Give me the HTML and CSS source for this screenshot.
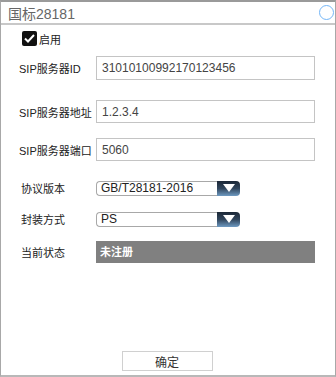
FILE: index.html
```html
<!DOCTYPE html>
<html lang="zh-CN">
<head>
  <meta charset="UTF-8" />
  <title>国标28181</title>
  <link rel="stylesheet" href="styles.css">
</head>
<body>
  <div class="window">
    <div class="titlebar">
      <span class="title">国标28181</span>
      <span class="close-ring"></span>
    </div>

    <div class="content">
      <!-- enable -->
      <label class="row check-row">
        <span class="checkbox">
          <svg width="11" height="9" viewBox="0 0 11 9"><path d="M1 4.5 L4 7.5 L10 1" fill="none" stroke="#fff" stroke-width="2"/></svg>
        </span>
        <span>启用</span>
      </label>

      <!-- server -->
      <div class="row field-row r1">
        <span class="label">SIP服务器ID</span>
        <input class="text" type="text" value="31010100992170123456" />
      </div>
      <div class="row field-row r2">
        <span class="label">SIP服务器地址</span>
        <input class="text" type="text" value="1.2.3.4" />
      </div>
      <div class="row field-row r3">
        <span class="label">SIP服务器端口</span>
        <input class="text" type="text" value="5060" />
      </div>

      <!-- options -->
      <div class="row select-row s1">
        <span class="label label-cn">协议版本</span>
        <div class="select">
          <span class="select-value">GB/T28181-2016</span>
          <span class="select-arrow"></span>
        </div>
      </div>
      <div class="row select-row s2">
        <span class="label label-cn">封装方式</span>
        <div class="select">
          <span class="select-value">PS</span>
          <span class="select-arrow"></span>
        </div>
      </div>

      <div class="row status-row">
        <span class="label label-cn">当前状态</span>
        <div class="status">未注册</div>
      </div>
    </div>

    <div class="footer">
      <button class="ok">确定</button>
    </div>
  </div>
</body>
</html>
```

FILE: styles.css
```css
body {
  margin: 0;
  padding: 0;
  background: #fff;
  font-family: "Liberation Sans", "Noto Sans CJK SC", sans-serif;
  color: #222;
}
.window {
  width: 336px;
  height: 377px;
  box-sizing: border-box;
  border: 1px solid #a8a8a8;
  border-top: 2px solid #9a9a9a;
  border-bottom: 2px solid #b8b8b8;
  display: flex;
  flex-direction: column;
}
.titlebar {
  height: 21px;
  border-bottom: 2px solid #c8c8c8;
  display: flex;
  align-items: center;
  justify-content: space-between;
  padding: 0 1px 0 7px;
}
.title {
  font-size: 14px;
  color: #666;
}
.close-ring {
  width: 13px;
  height: 13px;
  border: 1.5px solid #74b6f7;
  border-radius: 50%;
}
.content {
  flex: 1;
}
.row {
  display: flex;
  align-items: center;
}
.check-row {
  margin-top: 6px;
  height: 15px;
  padding-left: 21px;
  font-size: 11px;
  gap: 2px;
}
.checkbox {
  width: 15px;
  height: 15px;
  border-radius: 2px;
  background: #111;
  display: flex;
  align-items: center;
  justify-content: center;
}
.label {
  width: 77px;
  padding-left: 18px;
  font-size: 11px;
  color: #222;
  white-space: nowrap;
}
.label-cn {
  padding-left: 20px;
  width: 75px;
}
.text {
  width: 219px;
  box-sizing: border-box;
  border: 1px solid #c4c4c4;
  padding: 0 5px;
  font-family: inherit;
  font-size: 12px;
  color: #444;
  outline: none;
  margin: 0;
}
.r1 { margin-top: 10px; }
.r1 .text { height: 24px; }
.r2 { margin-top: 20px; }
.r2 .text { height: 23px; }
.r3 { margin-top: 15px; }
.r3 .text { height: 23px; }
.select {
  width: 144px;
  height: 15px;
  display: flex;
  box-sizing: border-box;
}
.select-value {
  flex: 1;
  border: 1px solid #a8a8a8;
  border-right: none;
  border-radius: 4px 0 0 4px;
  font-size: 12px;
  line-height: 13px;
  padding-left: 4px;
  color: #222;
}
.select-arrow {
  width: 23px;
  border-radius: 0 4px 4px 0;
  background: linear-gradient(#1b2736, #31465d 50%, #6e9ac2);
  position: relative;
}
.select-arrow::after {
  content: "";
  position: absolute;
  left: 6px;
  top: 3px;
  border-left: 6px solid transparent;
  border-right: 6px solid transparent;
  border-top: 8px solid #fff;
}
.s1 { margin-top: 19px; }
.s2 { margin-top: 15px; }
.status-row { margin-top: 14px; }
.status {
  width: 219px;
  height: 22px;
  background: #808080;
  color: #fff;
  font-weight: bold;
  font-size: 11px;
  line-height: 22px;
  padding-left: 4px;
  box-sizing: border-box;
}
.footer {
  display: flex;
  justify-content: center;
  padding-bottom: 4px;
  padding-right: 2px;
}
.ok {
  width: 91px;
  height: 20px;
  background: #fff;
  border: 1px solid #d0d0d0;
  font-family: inherit;
  font-size: 12px;
  color: #333;
  padding: 0;
}
```
